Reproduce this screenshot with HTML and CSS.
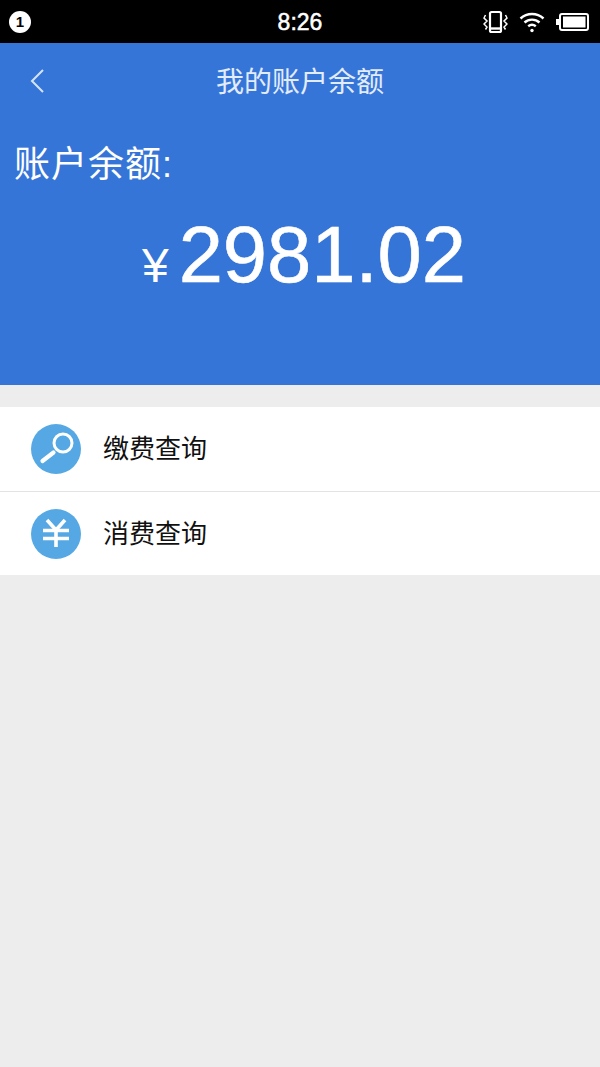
FILE: index.html
```html
<!DOCTYPE html>
<html lang="zh-CN">
<head>
   <meta charset="utf-8">
   <meta content="width=device-width, initial-scale=1.0" name="viewport">
   <title>我的账户余额</title>
   <link rel="stylesheet" href="styles.css">
</head>
<body>
   <div class="status-bar">
      <div class="status-left"><span class="notice-badge">1</span></div>
      <div class="status-time">8:26</div>
      <div class="status-right">
         <svg width="25" height="24" viewBox="0 0 25 24" fill="none" stroke="#fff">
            <rect x="7" y="2" width="11" height="20" rx="1.500" stroke-width="2.200"/>
            <path d="M8 18.500h9" stroke-width="2.400"/>
            <path d="M2.500 5L1 8l3 3-3 3 3 3-1.500 2.500M22.500 5L24 8l-3 3 3 3-3 3 1.500 2.500" stroke-width="1.500"/>
         </svg>
         <svg width="26" height="22" viewBox="0 0 26 22" fill="none" stroke="#fff" stroke-width="2.400">
            <path d="M1.500 7.500c6.500-6 16.500-6 23 0"/>
            <path d="M5.500 11.500c4.200-3.800 10.800-3.800 15 0"/>
            <path d="M9.200 15.200c2.200-1.800 5.400-1.800 7.600 0"/>
            <circle cx="13" cy="19.500" r="1.700" fill="#fff" stroke="none"/>
         </svg>
         <svg width="33" height="18" viewBox="0 0 33 18" fill="none">
            <rect x="4" y="1" width="28" height="16" rx="2" stroke="#fff" stroke-width="2"/>
            <rect x="0" y="6" width="3" height="6" fill="#fff"/>
            <rect x="7" y="3.500" width="22.500" height="11" fill="#fff"/>
         </svg>
      </div>
   </div>

   <div class="account-head">
      <div class="nav-bar">
         <svg class="back-icon" width="16" height="26" viewBox="0 0 16 26" fill="none" stroke="#d5e3f7" stroke-width="2">
            <path d="M14 2L3 13l11 11"/>
         </svg>
         <h3 class="nav-title">我的账户余额</h3>
      </div>
      <div class="balance-label">账户余额:</div>
      <div class="balance">
         <span class="currency">¥</span><span class="amount">2981.02</span>
      </div>
   </div>

   <div class="menu">
      <div class="menu-row">
         <span class="menu-icon">
            <svg width="50" height="50" viewBox="0 0 50 50" fill="none" stroke="#fff">
               <circle cx="32" cy="19" r="9" stroke-width="3"/>
               <path d="M22.500 28.500L11.500 37" stroke-width="4.200" stroke-linecap="round"/>
            </svg>
         </span>
         <span class="menu-text">缴费查询</span>
      </div>
      <div class="menu-row">
         <span class="menu-icon">
            <svg width="50" height="50" viewBox="0 0 50 50" fill="none" stroke="#fff" stroke-width="3.600">
               <path d="M16 11l9 10 9-10"/>
               <path d="M12 21.500h26M12 29.500h26M25 21v17"/>
            </svg>
         </span>
         <span class="menu-text">消费查询</span>
      </div>
   </div>
</body>
</html>
```
FILE: styles.css
```css
* {
    margin: 0;
    padding: 0;
    box-sizing: border-box;
}
body {
    width: 600px;
    height: 1067px;
    overflow: hidden;
    background: #ededed;
    font-family: "Liberation Sans", "Noto Sans CJK SC", sans-serif;
}
.status-bar {
    height: 43px;
    background: #000;
    display: flex;
    justify-content: space-between;
    align-items: center;
    padding: 0 11px 0 9px;
    position: relative;
}
.notice-badge {
    display: flex;
    justify-content: center;
    align-items: center;
    width: 22px;
    height: 22px;
    border-radius: 50%;
    background: #fff;
    color: #000;
    font-size: 15px;
    font-weight: bold;
}
.status-time {
    position: absolute;
    left: 0;
    right: 0;
    top: 9px;
    text-align: center;
    color: #fff;
    font-size: 23px;
    line-height: 27px;
    -webkit-text-stroke: 0.5px #fff;
}
.status-right {
    display: flex;
    align-items: center;
    gap: 11px;
}
.account-head {
    height: 342px;
    background: #3675d8;
    color: #fff;
}
.nav-bar {
    height: 76px;
    display: flex;
    justify-content: center;
    align-items: center;
    position: relative;
}
.back-icon {
    position: absolute;
    left: 29px;
    top: 25px;
}
.nav-title {
    font-size: 28px;
    line-height: 76px;
    margin-top: 4px;
    font-weight: normal;
    color: #e3ecfa;
}
.balance-label {
    font-size: 36px;
    line-height: 44px;
    padding-left: 14px;
    margin-top: 24px;
    letter-spacing: 1px;
}
.balance {
    display: flex;
    justify-content: center;
    align-items: baseline;
    margin-top: 23px;
    padding-left: 8px;
}
.currency {
    font-size: 48px;
    margin-right: 10px;
}
.amount {
    font-size: 79.5px;
    line-height: 90px;
    -webkit-text-stroke: 0.6px #fff;
}
.menu {
    margin-top: 22px;
    background: #fff;
}
.menu-row {
    height: 84px;
    display: flex;
    align-items: center;
    padding-left: 31px;
}
.menu-row + .menu-row {
    border-top: 1px solid #e3e3e3;
}
.menu-icon {
    width: 50px;
    height: 50px;
    border-radius: 50%;
    background: #55a8e4;
    margin-right: 22px;
}
.menu-text {
    font-size: 26px;
    line-height: 30px;
    color: #111;
}
```
